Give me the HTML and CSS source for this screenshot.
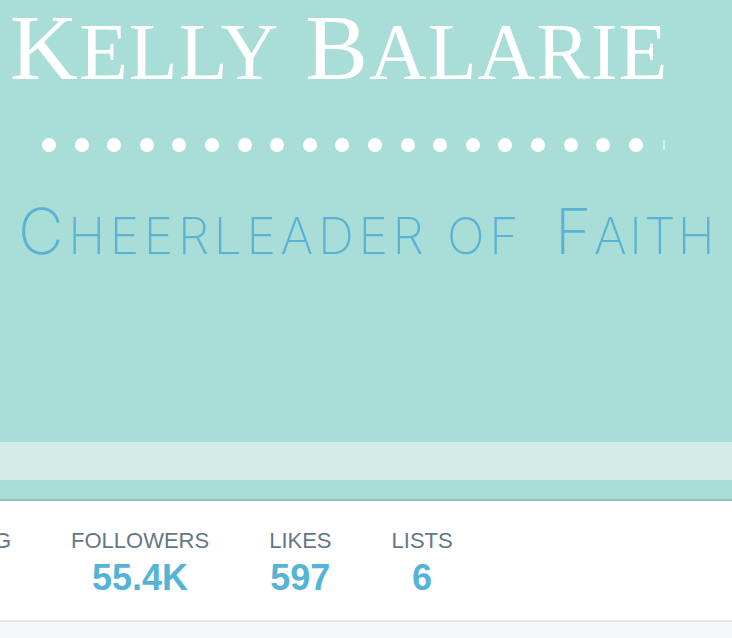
FILE: index.html
```html
<!DOCTYPE html>
<html>
<head>
<meta charset="utf-8">
<link rel="stylesheet" href="styles.css">
</head>
<body>
<header class="banner">
  <h1 class="title"><span class="big">K</span><span class="sm">elly</span> <span class="big">B</span><span class="sm">alarie</span></h1>
  <div class="dots">
    <i></i><i></i><i></i><i></i><i></i><i></i><i></i><i></i><i></i><i></i><i></i><i></i><i></i><i></i><i></i><i></i><i></i><i></i><i></i><b></b>
  </div>
  <p class="tagline"><span class="tbig">C</span><span class="tsm">heerleader of </span><span class="faith"><span class="tbig">F</span><span class="tsm">aith</span></span></p>
  <div class="band"></div>
</header>
<nav class="stats">
  <div class="stat first"><span class="label">FOLLOWING</span><span class="value">1,234</span></div>
  <div class="stat"><span class="label">FOLLOWERS</span><span class="value">55.4K</span></div>
  <div class="stat"><span class="label">LIKES</span><span class="value">597</span></div>
  <div class="stat"><span class="label">LISTS</span><span class="value">6</span></div>
</nav>
<div class="below"></div>
</body>
</html>
```
FILE: styles.css
```css
html, body {
  margin: 0;
  padding: 0;
  background: #f5f8fa;
  overflow: hidden;
}
.banner {
  height: 499px;
  background: #a9ddd7;
  border-bottom: 2px solid #93bfba;
  display: flex;
  flex-direction: column;
  overflow: hidden;
}
.title {
  margin: 0 0 0 10px;
  font-family: "Liberation Serif", serif;
  font-weight: normal;
  color: #ffffff;
  line-height: 94px;
  white-space: nowrap;
  letter-spacing: 1px;
  word-spacing: 17px;
}
.title .big { font-size: 94px; }
.title .sm { font-size: 80px; text-transform: uppercase; }
.dots {
  display: flex;
  align-items: center;
  gap: 18.6px;
  margin: 23px 0 0 42px;
  height: 14px;
}
.dots i {
  width: 14px;
  height: 14px;
  border-radius: 50%;
  background: #ffffff;
  flex: none;
}
.dots b {
  width: 2px;
  height: 10px;
  background: rgba(255,255,255,0.5);
  margin-left: 2px;
}
.tagline {
  margin: 49px 0 0 18px;
  font-family: "Inter", "Lato", sans-serif;
  font-weight: 200;
  color: #5bb3d3;
  line-height: 60px;
  white-space: nowrap;
  letter-spacing: 4.6px;
  word-spacing: 0;
}
.tagline .faith { letter-spacing: 2.3px; margin-left: 13px; }
.tagline .tbig { font-size: 63px; }
.tagline .tsm { font-size: 50px; text-transform: uppercase; }
.band {
  margin-top: auto;
  margin-bottom: 19px;
  height: 38px;
  background: #d3ece8;
}
.stats {
  height: 121px;
  background: #ffffff;
  border-bottom: 2px solid #e1e8ed;
  display: flex;
  gap: 60px;
  padding-top: 27px;
  box-sizing: border-box;
  font-family: "Liberation Sans", Arial, sans-serif;
}
.stat {
  display: flex;
  flex-direction: column;
  align-items: center;
}
.stat.first { margin-left: -121px; }
.label {
  font-size: 22px;
  line-height: 26px;
  color: #657786;
}
.value {
  margin-top: 4px;
  font-size: 36px;
  line-height: 40px;
  font-weight: bold;
  color: #55b3d5;
}
.below {
  height: 40px;
  background: #f5f8fa;
}
```
